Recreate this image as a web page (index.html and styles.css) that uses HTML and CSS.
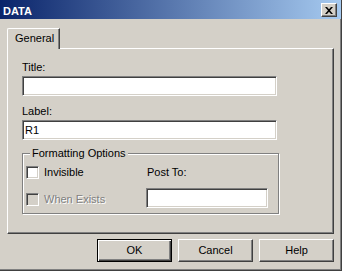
FILE: index.html
```html
<!DOCTYPE html>
<html lang="en">
<head>
    <meta charset="UTF-8">
    <title>DATA</title>
    <link rel="stylesheet" href="styles.css">
</head>
<body>
    <div class="window">
        <div class="titlebar">
            <span class="caption">DATA</span>
            <span class="close-btn">
                <svg width="8" height="7" viewBox="0 0 8 7">
                    <path d="M0 0h2l2 2.3L6 0h2L5 3.5 8 7H6L4 4.7 2 7H0l3-3.5z" fill="#000"/>
                </svg>
            </span>
        </div>

        <div class="content">
            <div class="tab">General</div>
            <div class="panel">
                <div class="field-label">Title:</div>
                <input class="textbox" type="text" value="">

                <div class="field-label second">Label:</div>
                <input class="textbox" type="text" value="R1">

                <!-- Formatting Options -->
                <div class="group">
                    <span class="group-title">Formatting Options</span>
                    <div class="group-grid">
                        <div class="check-row">
                            <span class="checkbox"></span>
                            <span>Invisible</span>
                        </div>
                        <div class="post-label">Post To:</div>
                        <div class="check-row disabled">
                            <span class="checkbox"></span>
                            <span>When Exists</span>
                        </div>
                        <input class="textbox post-box" type="text" value="">
                    </div>
                </div>
            </div>

            <div class="buttons">
                <button class="btn default">OK</button>
                <button class="btn">Cancel</button>
                <button class="btn">Help</button>
            </div>
        </div>
    </div>
</body>
</html>
```

FILE: styles.css
```css
html, body {
    margin: 0;
    padding: 0;
}

body {
    background-color: #d4d0c8;
    font-family: "Liberation Sans", Arial, sans-serif;
    font-size: 11px;
    line-height: 13px;
    color: #000;
}

.window {
    width: 342px;
    height: 271px;
    box-sizing: border-box;
    border-right: 1px solid #404040;
    border-bottom: 1px solid #404040;
    box-shadow: inset -1px -1px #808080;
    background-color: #d4d0c8;
}

/* Title bar */
.titlebar {
    height: 19px;
    display: flex;
    align-items: flex-start;
    justify-content: space-between;
    padding: 0 4px 0 3px;
    background: linear-gradient(to right, #0a246a, #a6caf0);
}

.caption {
    color: #fff;
    font-weight: bold;
    padding-top: 5px;
}

.close-btn {
    width: 16px;
    height: 14px;
    margin-top: 3px;
    box-sizing: border-box;
    display: flex;
    align-items: center;
    justify-content: center;
    background-color: #d4d0c8;
    border: 1px solid;
    border-color: #fff #404040 #404040 #fff;
    box-shadow: inset -1px -1px #808080;
}

.close-btn svg {
    display: block;
}

/* Body */
.content {
    padding: 9px 7px 0 7px;
}

.tab {
    position: relative;
    z-index: 1;
    width: 53px;
    height: 21px;
    box-sizing: border-box;
    margin-bottom: -1px;
    padding: 3px 0 0 7px;
    background-color: #d4d0c8;
    border: 1px solid;
    border-color: #fff #404040 transparent #fff;
    border-bottom: none;
    border-top-left-radius: 2px;
    box-shadow: inset -1px 0 #808080;
}

.panel {
    height: 186px;
    box-sizing: border-box;
    padding: 12px 0 0 14px;
    border: 1px solid;
    border-color: #fff #404040 #404040 #fff;
    box-shadow: inset -1px -1px #808080;
}

.field-label {
    margin-bottom: 2px;
}

.field-label.second {
    margin-top: 9px;
}

.textbox {
    display: block;
    width: 255px;
    height: 20px;
    box-sizing: border-box;
    margin: 0;
    padding: 0 0 0 2px;
    font: inherit;
    color: #000;
    background-color: #fff;
    border: 1px solid;
    border-color: #808080 #fff #fff #808080;
    box-shadow: inset 1px 1px #404040, inset -1px -1px #d4d0c8;
    outline: none;
}

/* Group box */
.group {
    width: 257px;
    box-sizing: border-box;
    margin-top: 13px;
    padding: 0 0 5px 3px;
    border: 1px solid #808080;
    box-shadow: inset 1px 1px #fff, 1px 1px #fff;
}

.group-title {
    display: table;
    margin: -7px 0 0 4px;
    padding: 0 2px;
    background-color: #d4d0c8;
}

.group-grid {
    display: grid;
    grid-template-columns: 120px 122px;
    grid-template-rows: 15px 20px;
    row-gap: 8px;
    align-items: center;
    margin-top: 5px;
}

.check-row {
    display: flex;
    align-items: center;
    gap: 5px;
}

.checkbox {
    width: 13px;
    height: 13px;
    box-sizing: border-box;
    background-color: #fff;
    border: 1px solid;
    border-color: #808080 #fff #fff #808080;
    box-shadow: inset 1px 1px #404040, inset -1px -1px #d4d0c8;
}

.check-row.disabled {
    color: #808080;
    text-shadow: 1px 1px #fff;
    padding-top: 3px;
}

.check-row.disabled .checkbox {
    background-color: #d4d0c8;
}

.post-label {
    padding-left: 1px;
}

.post-box {
    width: 122px;
}

/* Buttons */
.buttons {
    display: flex;
    justify-content: flex-end;
    gap: 6px;
    margin-top: 5px;
}

.btn {
    width: 75px;
    height: 23px;
    box-sizing: border-box;
    margin: 0;
    padding: 0;
    font: inherit;
    color: #000;
    background-color: #d4d0c8;
    border: 1px solid;
    border-color: #fff #404040 #404040 #fff;
    box-shadow: inset -1px -1px #808080;
}

.btn.default {
    border-color: #000;
    box-shadow: inset 1px 1px #fff, inset -1px -1px #404040, inset -2px -2px #808080;
}
```
